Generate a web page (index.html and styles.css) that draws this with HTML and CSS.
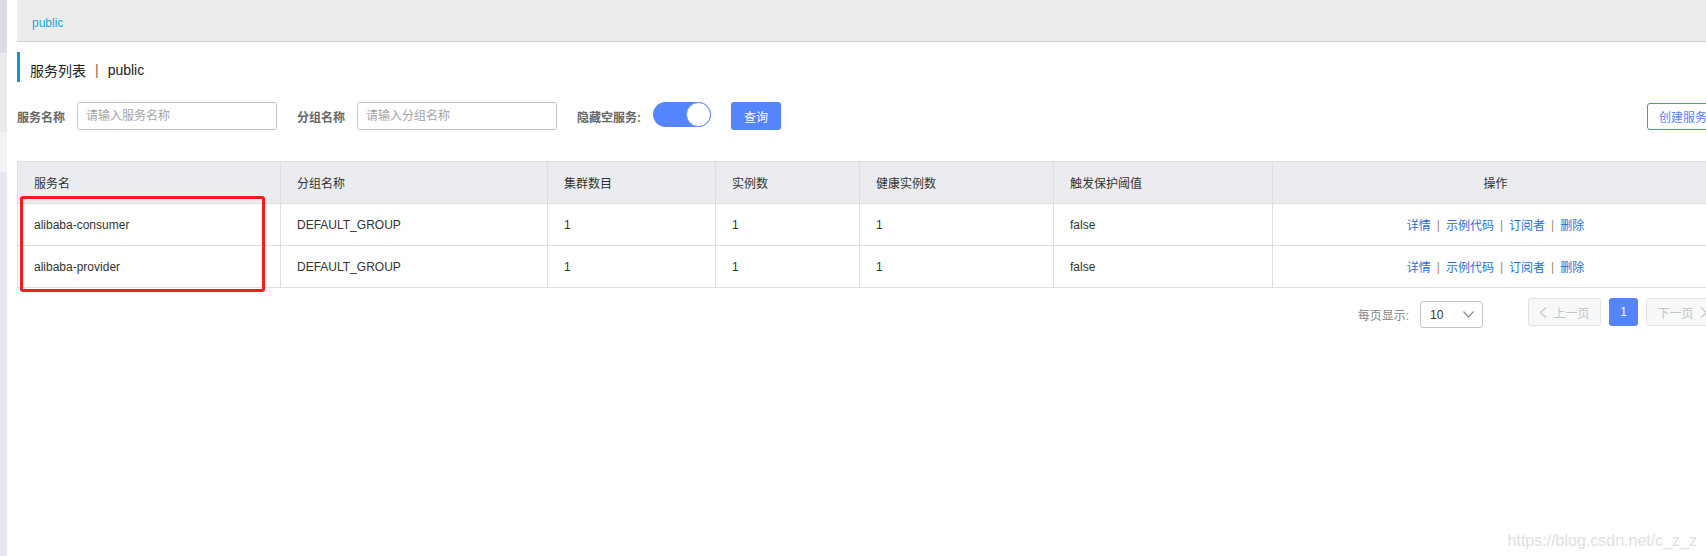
FILE: index.html
```html
<!DOCTYPE html>
<html lang="zh-CN">
<head>
<meta charset="utf-8">
<title>服务列表</title>
<link rel="stylesheet" href="styles.css">
</head>
<body>
<div class="app">
  <div class="sidebar">
    <div class="band band-1"></div>
    <div class="band band-2"></div>
    <div class="band band-3"></div>
    <div class="band band-4"></div>
  </div>
  <div class="main">
    <div class="topbar"><span class="crumb">public</span></div>
    <div class="title"><span>服务列表</span><span class="title-sep">|</span><span>public</span></div>
    <div class="filters">
      <span class="flabel">服务名称</span>
      <input class="finput" type="text" placeholder="请输入服务名称">
      <span class="flabel spaced">分组名称</span>
      <input class="finput" type="text" placeholder="请输入分组名称">
      <span class="flabel spaced">隐藏空服务:</span>
      <span class="switch"><span class="knob"></span></span>
      <button class="btn-primary">查询</button>
      <button class="btn-outline">创建服务</button>
    </div>
    <div class="table">
      <div class="row head">
        <div class="cell">服务名</div>
        <div class="cell">分组名称</div>
        <div class="cell">集群数目</div>
        <div class="cell">实例数</div>
        <div class="cell">健康实例数</div>
        <div class="cell">触发保护阈值</div>
        <div class="cell center">操作</div>
      </div>
      <div class="row">
        <div class="cell">alibaba-consumer</div>
        <div class="cell">DEFAULT_GROUP</div>
        <div class="cell">1</div>
        <div class="cell">1</div>
        <div class="cell">1</div>
        <div class="cell">false</div>
        <div class="cell center"><a class="link">详情</a><span class="asep">|</span><a class="link">示例代码</a><span class="asep">|</span><a class="link">订阅者</a><span class="asep">|</span><a class="link">删除</a></div>
      </div>
      <div class="row">
        <div class="cell">alibaba-provider</div>
        <div class="cell">DEFAULT_GROUP</div>
        <div class="cell">1</div>
        <div class="cell">1</div>
        <div class="cell">1</div>
        <div class="cell">false</div>
        <div class="cell center"><a class="link">详情</a><span class="asep">|</span><a class="link">示例代码</a><span class="asep">|</span><a class="link">订阅者</a><span class="asep">|</span><a class="link">删除</a></div>
      </div>
    </div>
    <div class="pager">
      <div class="pagesize">
        <span class="pagesize-label">每页显示:</span>
        <div class="select">
          <span>10</span>
          <svg class="chev" width="11" height="7" viewBox="0 0 11 7"><polyline points="0.5,0.5 5.5,6 10.5,0.5" fill="none" stroke="#8a8d95" stroke-width="1.2"/></svg>
        </div>
      </div>
      <div class="pages">
        <button class="pbtn disabled"><svg width="8" height="11" viewBox="0 0 8 11"><polyline points="7,0.5 1.5,5.5 7,10.5" fill="none" stroke="#c8c9cc" stroke-width="1.3"/></svg><span>上一页</span></button>
        <button class="pnum">1</button>
        <button class="pbtn disabled"><span>下一页</span><svg width="8" height="11" viewBox="0 0 8 11"><polyline points="1,0.5 6.5,5.5 1,10.5" fill="none" stroke="#c8c9cc" stroke-width="1.3"/></svg></button>
      </div>
    </div>
  </div>
</div>
<div class="redbox"></div>
<div class="watermark">https://blog.csdn.net/c_z_z</div>
</body>
</html>
```
FILE: styles.css
```css
html, body {
  margin: 0;
  padding: 0;
  overflow: hidden;
  background: #fff;
}
body {
  width: 1706px;
  height: 556px;
  position: relative;
  font-family: "Liberation Sans", "Noto Sans CJK SC", sans-serif;
  font-size: 12px;
  color: #333;
}
.app {
  display: flex;
  width: 1730px;
  height: 556px;
}
.sidebar {
  width: 7px;
  flex: none;
  display: flex;
  flex-direction: column;
  margin-right: 10px;
}
.band-1 { height: 53px; background: #d9dce3; }
.band-2 { height: 79px; background: #e8eaee; }
.band-3 { height: 40px; background: #f2f3f6; }
.band-4 { flex: 1; background: #e6e8ed; }

.main {
  width: 1702px;
  flex: none;
  display: flex;
  flex-direction: column;
}
.topbar {
  height: 41px;
  box-sizing: content-box;
  border-bottom: 1px solid #cdcdcd;
  background: #ececec;
  display: flex;
  align-items: center;
  padding-left: 15px;
  padding-top: 0;
}
.crumb {
  color: #23a6de;
  font-size: 12px;
  padding-top: 4px;
}
.title {
  margin-top: 10px;
  height: 30px;
  border-left: 3px solid #0f95d3;
  padding-left: 10px;
  padding-top: 5px;
  box-sizing: border-box;
  display: flex;
  align-items: center;
  font-size: 14px;
  color: #222;
}
.title-sep {
  margin: 0 9px;
  color: #7a6a55;
}
.filters {
  margin-top: 20px;
  height: 28px;
  display: flex;
  align-items: center;
}
.flabel {
  font-weight: bold;
  color: #666;
  margin-right: 12px;
}
.flabel.spaced {
  margin-left: 20px;
}
.finput {
  width: 200px;
  height: 28px;
  box-sizing: border-box;
  border: 1px solid #c4c6cf;
  border-radius: 3px;
  padding: 0 8px;
  font-family: inherit;
  font-size: 12px;
  color: #333;
  outline: none;
  margin: 0;
}
.finput::placeholder {
  color: #a3a3a8;
}
.switch {
  width: 58px;
  height: 25px;
  box-sizing: border-box;
  border-radius: 13px;
  background: #5584ff;
  display: flex;
  justify-content: flex-end;
  align-items: center;
  margin-top: -3px;
}
.knob {
  width: 25px;
  height: 25px;
  box-sizing: border-box;
  border-radius: 50%;
  background: #fff;
  border: 1px solid #6e96ff;
}
.btn-primary {
  margin-left: 20px;
  width: 50px;
  height: 28px;
  border: none;
  border-radius: 3px;
  background: #5584ff;
  color: #fff;
  font-family: inherit;
  font-size: 12px;
  padding: 0;
}
.btn-outline {
  margin-left: auto;
  width: 72px;
  height: 27px;
  box-sizing: border-box;
  border: 1px solid #5584ff;
  border-radius: 3px;
  background: #fff;
  color: #5584ff;
  font-family: inherit;
  font-size: 12px;
  padding: 0;
}
.table {
  margin-top: 31px;
  width: 1702px;
  border-top: 1px solid #dcdee3;
  border-left: 1px solid #dcdee3;
  box-sizing: border-box;
}
.row {
  display: grid;
  grid-template-columns: 263px 267px 168px 144px 194px 219px 446px;
}
.row.head {
  background: #ebecf0;
}
.cell {
  height: 42px;
  box-sizing: border-box;
  border-right: 1px solid #dcdee3;
  border-bottom: 1px solid #dcdee3;
  padding-left: 16px;
  display: flex;
  align-items: center;
  color: #333;
  white-space: nowrap;
}
.cell.center {
  justify-content: center;
  padding-left: 0;
}
.link {
  color: #2a6fd6;
  cursor: pointer;
}
.asep {
  margin: 0 6px;
  color: #9a8c7a;
}
.pager {
  margin-top: 10px;
  display: flex;
  justify-content: flex-end;
  align-items: flex-start;
}
.pagesize {
  display: flex;
  align-items: center;
  margin-top: 3px;
}
.pagesize-label {
  color: #888;
  margin-right: 11px;
}
.select {
  width: 63px;
  height: 27px;
  box-sizing: border-box;
  border: 1px solid #c4c6cf;
  border-radius: 3px;
  display: flex;
  align-items: center;
  justify-content: space-between;
  padding: 0 8px 0 9px;
  color: #333;
}
.chev {
  display: block;
}
.pages {
  display: flex;
  gap: 8px;
  margin-left: 45px;
}
.pbtn {
  width: 73px;
  height: 28px;
  box-sizing: border-box;
  border: 1px solid #e3e4e8;
  border-radius: 3px;
  background: #f7f8fa;
  color: #c3c4c8;
  font-family: inherit;
  font-size: 12px;
  display: flex;
  align-items: center;
  justify-content: center;
  gap: 6px;
  padding: 0;
}
.pbtn svg {
  display: block;
}
.pnum {
  width: 29px;
  height: 28px;
  border: none;
  border-radius: 3px;
  background: #5584ff;
  color: #fff;
  font-family: inherit;
  font-size: 12px;
  padding: 0;
}
.redbox {
  position: absolute;
  left: 20px;
  top: 196px;
  width: 245px;
  height: 96px;
  box-sizing: border-box;
  border: 3px solid #f31d1d;
  border-radius: 3px;
}
.watermark {
  position: absolute;
  right: 9px;
  top: 531px;
  font-family: "Liberation Sans", sans-serif;
  font-size: 16px;
  color: #e0e0e0;
  line-height: 20px;
}
```
